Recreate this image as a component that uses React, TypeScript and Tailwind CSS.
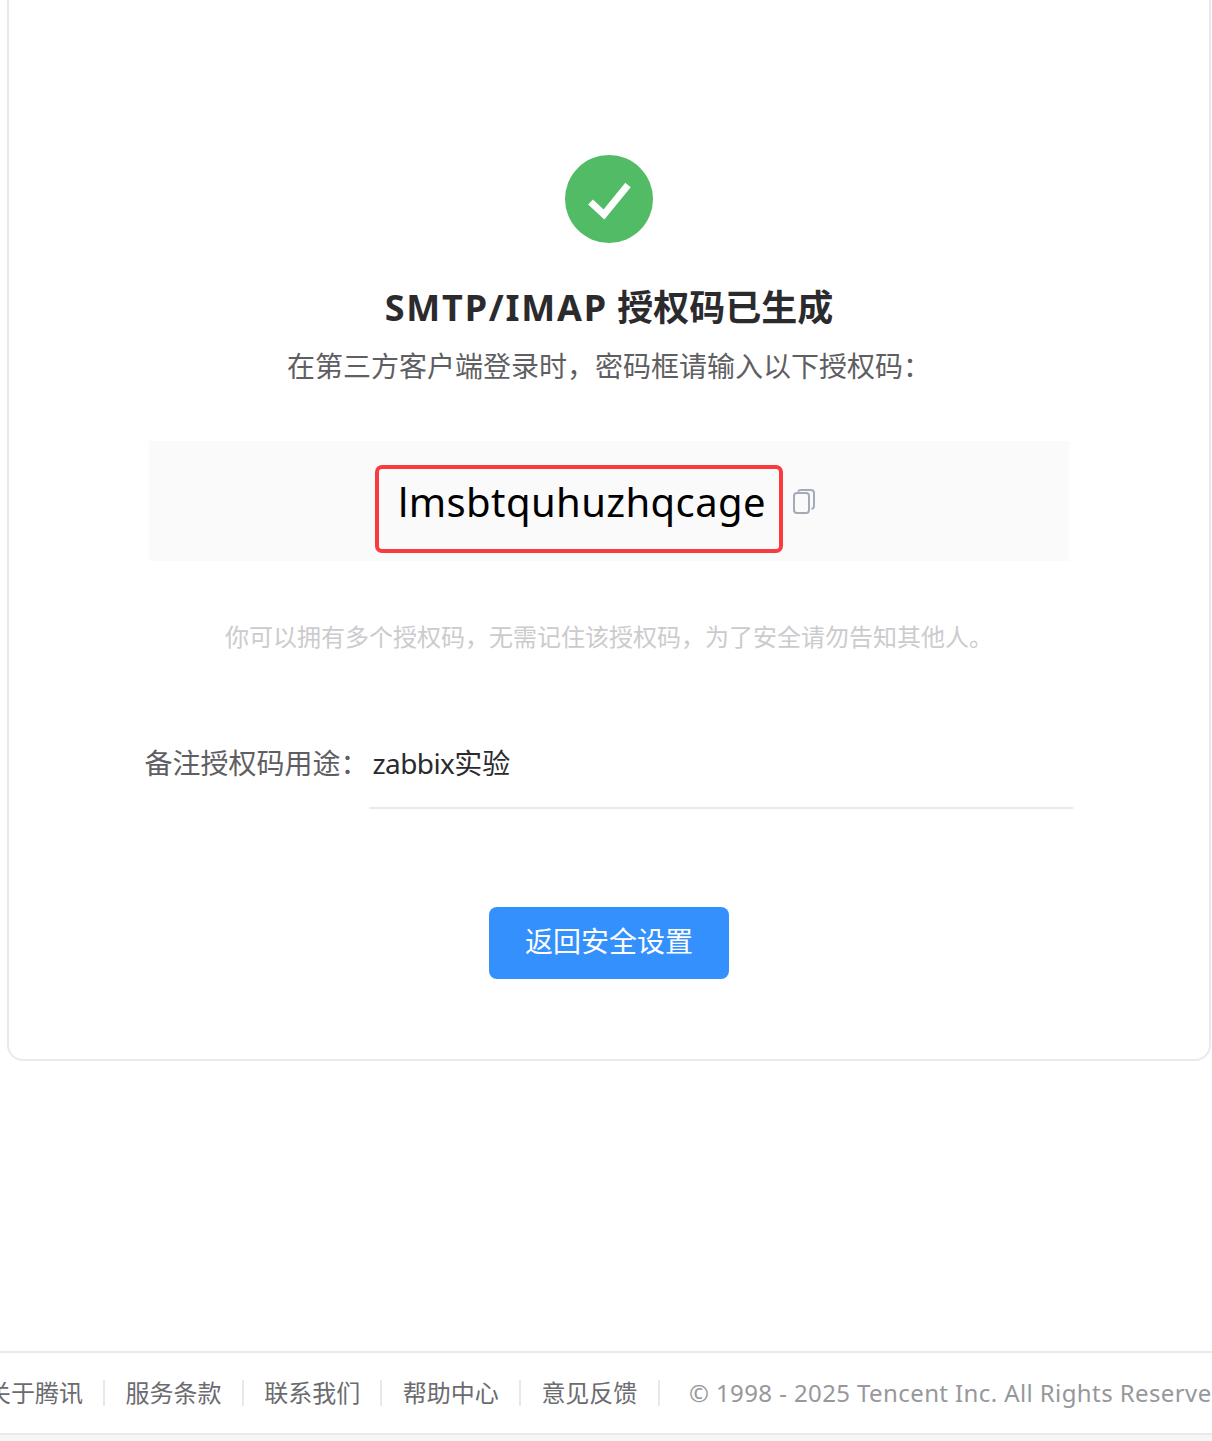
import React from "react";

const FONT = "font-['Noto_Sans','Noto_Sans_CJK_SC',sans-serif]";

const footerLinks = ["关于腾讯", "服务条款", "联系我们", "帮助中心", "意见反馈"];

function SuccessIcon() {
  return (
    <svg viewBox="0 0 88 88" className="w-[88px] h-[88px] block">
      <circle cx="44" cy="44" r="44" fill="#52bb66" />
      <path d="M25.5 47 L39 59.5 L63 30" fill="none" stroke="#ffffff" strokeWidth="7" />
    </svg>
  );
}

function CopyIcon() {
  return (
    <svg viewBox="0 0 22 25" className="w-[22px] h-[25px] block" fill="none" stroke="#a3abb8" strokeWidth="2">
      <rect x="1" y="4" width="15" height="20" rx="3" />
      <path d="M5 2.5 C5.5 1.5 6.5 1 8 1 H18 C20 1 21 2 21 4 V17 C21 18.5 20 19.5 18.5 20" />
    </svg>
  );
}

export default function App() {
  return (
    <div className={`${FONT} h-[1441px] overflow-hidden bg-white flex flex-col`}>
      <div className="ml-[7px] mr-px -mt-[20px] h-[1081px] shrink-0 border-2 border-[#e9e9ef] rounded-[16px] flex flex-col items-center pt-[173px]">
        <SuccessIcon />
        <h1 className="mt-[40px] text-[36px] leading-[50px] font-bold text-[#2b2b2e] whitespace-nowrap">
          <span className="tracking-[1.8px]">SMTP/IMAP</span> 授权码已生成
        </h1>
        <p className="mt-[13px] text-[28px] leading-[40px] text-[#5f5f63]">在第三方客户端登录时，密码框请输入以下授权码：</p>

        <div className="mt-[55px] w-[920px] h-[120px] bg-[#fafafa] flex items-center justify-center">
          <div className="relative flex items-center ml-[-5px] mt-[2px]">
            <span className="text-[40px] leading-[56px] tracking-[0.4px] text-black">lmsbtquhuzhqcage</span>
            <div className="ml-[27px] mt-[-2px]">
              <CopyIcon />
            </div>
            <div className="absolute left-[-23px] top-[-9px] w-[408px] h-[88px] border-4 border-[#f93a3f] rounded-[7px]" />
          </div>
        </div>

        <p className="mt-[59px] text-[24px] leading-[34px] text-[#cbcbce]">你可以拥有多个授权码，无需记住该授权码，为了安全请勿告知其他人。</p>

        <div className="mt-[83px] w-[930px] ml-[1px] flex items-start">
          <label className="w-[226px] text-[28px] leading-[52px] text-[#5f5f63] whitespace-nowrap">备注授权码用途：</label>
          <div className="w-[704px] h-[72px] ml-[-2px] border-b-2 border-[#e9e9ec] pl-[4px] text-[28px] leading-[52px] text-[#2b2b2e]">
            <span className="tracking-[-0.6px]">zabbix</span>实验
          </div>
        </div>

        <button className="mt-[98px] w-[240px] h-[72px] rounded-[8px] bg-[#3490fc] text-white text-[28px] pb-[4px]">返回安全设置</button>
      </div>

      <div className="mt-[290px] h-[84px] shrink-0 border-y-2 border-[#e9e9ef] flex items-center whitespace-nowrap text-[24px] text-[#6b6b70] ml-[-13px] w-[1300px]">
        {footerLinks.map((link) => (
          <div key={link} className="flex items-center">
            <span>{link}</span>
            <span className="mx-[20.3px] w-[2px] h-[26px] bg-[#e6e8ee]" />
          </div>
        ))}
        <span className="ml-[9px] tracking-[0.4px] text-[#97979c]">© 1998 - 2025 Tencent Inc. All Rights Reserved</span>
      </div>
      <div className="flex-1 bg-[#f6f6f6]" />
    </div>
  );
}
